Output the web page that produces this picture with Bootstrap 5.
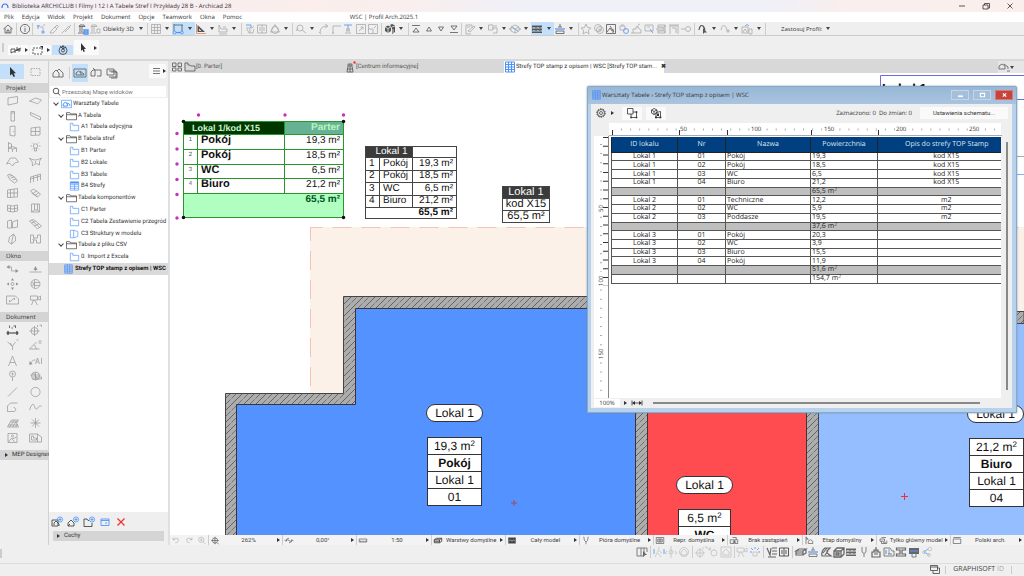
<!DOCTYPE html>
<html lang="pl">
<head>
<meta charset="utf-8">
<meta name="viewport" content="width=device-width, initial-scale=1">
<title>Archicad 28</title>
<link href="https://cdn.jsdelivr.net/npm/bootstrap@5.3.0/dist/css/bootstrap.min.css" rel="stylesheet">
<style>
:root{--chrome:#efefef;--hot:#c3dff9;--ink:#333;--blue:#4d92f8}
body{font-family:"Open Sans","Noto Sans",sans-serif;font-size:6px;line-height:8px;color:var(--ink);background:var(--chrome);text-rendering:geometricPrecision}
button,input{font:inherit;color:inherit}
button{border:0;background:none;padding:0}
a{color:inherit;text-decoration:none}
svg{display:block;overflow:visible}
.ico{width:12px;height:12px;fill:none;stroke:currentColor;stroke-width:.8;flex:none}
.ico .f{fill:currentColor;stroke:none}
.ico .b{stroke:var(--blue)}
.title-bar{height:12px;background:linear-gradient(90deg,#f3eff6,#fbeeec 30%,#f9efee 40%,#eff0f8 52%,#f0f0f8 75%,#f8efee 82%,#faefed)}
.menu-bar{height:10px;background:#fff}
.menu-bar a,.profile{line-height:11px}
.menu-links{gap:8px;padding-left:4px}
.profile{margin-left:-128px}
.tool-bar{height:14px;background:var(--chrome);border-bottom:1px solid #ccc;color:#555}
.tools{width:75%;padding-left:2px}
.tools>.tool{flex:25 1 0;min-width:0}
.tools>.drop{flex:20 1 0;min-width:0}
.tools>.split{flex:8 1 0;min-width:0}
.tools>.named{flex:69 1 0;min-width:0;text-align:center;color:#333}
.apply{margin-left:13px;color:#333}
.tool,.drop,.split{display:flex;align-items:center;justify-content:center;height:13px}
.split::before{content:"";width:1px;height:12px;background:#ccc}
.drop::before{content:"";border:2px solid transparent;border-top:3px solid #444;border-bottom:0}
.arrow-r::after{content:"";border:2px solid transparent;border-left:3px solid #333;border-right:0;flex:none}
.hot{background:var(--hot)}
.pale{color:#aaa}.faint{color:#c2c2c2}
.t-blue{color:#3d8bff}.t-red{color:#f02f2f}.t-dark{color:#333}
.bar-two{height:25px;border-bottom:2px solid #d8d8d8;padding:4px 2px}
.bar-two button{width:21px;height:10px;background:#fafafa}
.bar-two button+button{margin-left:1px}
.bar-two .hot{background:var(--hot)}
.bar-two .tall{width:25px;height:15px}
.grip{width:2px;height:9px;background:#ccc}
.toolbox{width:49px;border-right:1px solid #d0d0d0;color:#939393}
.toolbox h2,.fold{font-size:6px;font-weight:400;line-height:10px;height:10px;margin:0;background:#d4d4d4;padding-left:6px;color:#333;white-space:nowrap}
.toolbox .mep{padding-left:5px;font-family:Roboto,sans-serif}
.pair{display:grid;grid-template-columns:24px 23px;grid-auto-rows:1fr;margin-bottom:4px}
.pair.ten{height:154px}.pair.three{height:47px}.pair.eight{height:124px}
.pair .tool{height:auto;min-height:0}
.pair .ico{width:13px;stroke-width:.7}
.pair.top{height:19px;margin:3px 0 0;padding-bottom:4px}
.pair.top .hot{color:#333}
.navi{width:121px;border-right:2px solid #e0e0e0;font-family:Roboto,sans-serif}
.navi-head{height:24px;padding:3px 2px 0 1px;color:#555}
.navi-icons .tool{flex:none;width:16px;height:18px}
.navi-icons .split{width:6px;height:18px}
.menu-btn{width:17px;height:14px;background:#fafafa}
.search{height:11px;background:#fff;margin:1px 2px 1px 1px}
.search input{border:0;outline:0;padding:0;width:90px;height:10px;background:none}
.search input::placeholder{color:#777;opacity:1}
.tree-pane{background:#fff}
.tree{height:177px}
.tree li{flex:1 1 0;min-height:0;white-space:nowrap}
.tree .ico{width:11px;height:10px;margin-right:1px}
.tree .l0{padding-left:3px}.tree .l1{padding-left:8px}.tree .l2{padding-left:20px}.tree .l3{padding-left:14px}
.open-mark{width:4px;height:4px;border:solid #444;border-width:0 1px 1px 0;transform:rotate(45deg);margin:0 3px 2px 2px;flex:none}
.chosen{background:#dadada;font-weight:700;color:#111}
.navi-foot{height:19px}
.navi-foot .tool{width:16px}
.fold{padding-left:4px}
.tabs{height:12px;background:#d8d8d8;color:#555;font-family:Roboto,sans-serif}
.tabs .tab-item{width:160px;height:12px;white-space:nowrap}
.tabs .chip{width:14px;background:#e4e4e4}
.tabs .end{width:26px;background:#e6e6e6}
.tab-item.live{background:#fff;color:#333}
.status{height:10px;background:#f3f3f3;white-space:nowrap;color:#444;font-family:Roboto,sans-serif}
.quick{flex:1 1 0;min-width:0;padding:0 2px 0 1px;border-left:1px solid #ccc}
.status .first{width:38px}
.status .ico{height:9px;width:10px}
.bottom-bar{height:19px;border-bottom:1px solid #ddd}
.bottom-tools{width:297px;margin-left:auto;margin-right:91px;color:#666}
.bottom-tools>.tool{flex:25 1 0}.bottom-tools>.split{flex:8 1 0}
.foot{height:12px;color:#444}
.foot-id{font-size:7px;border:solid #ccc;border-width:0 1px;padding:0 7px}
.canvas-area{background:#fff;font-family:"Liberation Sans",Arial,sans-serif;color:#111}
.plan{position:absolute;inset:0;width:100%;height:100%}
.on-plan{position:absolute}
table{border-collapse:collapse}
.zone-a{left:13px;top:48px;width:161px;height:97px;font-size:10px;line-height:11px;table-layout:fixed}
.zone-a td,.zone-a th{border:1px solid #28962d;padding:0 3px;background:#fff;vertical-align:top}
.zone-a td:nth-child(2){font-weight:700;font-size:11px}
.zone-a td:first-child{font-size:6px;text-align:center;padding:0;color:#555}
.zone-a .cap{background:#003600;color:#c9f5cf;font-size:9px;line-height:12px;padding-left:8px;text-align:left}
.zone-a .floor{background:#67b294;color:#b7f7c0;font-size:10px;line-height:12px;text-align:right}
.zone-a tfoot td,.zone-a tfoot td:first-child{background:#b0ffc1;font-weight:700;font-size:10px;line-height:12px;color:#052;text-align:right;padding:0 3px}
.zone-b{left:195px;top:73px;width:92px;height:73px;font-size:10px;line-height:10px;table-layout:fixed;background:#fff}
.zone-b td,.zone-b th{border:1px solid #444;padding:0 3px;font-weight:400}
.zone-b th{background:#3b3b3b;color:#fff;text-align:center;padding-left:8px}
.zone-b tfoot td{font-weight:700}
.zone-c{left:332px;top:113px;width:48px;height:37px;font-size:11px;line-height:11px;text-align:center}
.zone-c td,.zone-c th{border:1px solid #444;padding:0;font-weight:400;background:#fff}
.zone-c th{background:#3b3b3b;color:#fff}
.tag{width:57px;height:18px;border:1px solid #333;border-radius:9px;background:#fff;font-size:12px;line-height:16px;text-align:center}
.stamp{width:55px;border:1px solid #333;background:#fff;font-size:12px;line-height:16px;text-align:center}
.stamp div+div{border-top:1px solid #333}
.stamp sup{font-size:8px;line-height:0;top:-4px}
.tag-pokoj{left:256px;top:331px}.stamp-pokoj{left:257px;top:364px}
.tag-wc{left:506px;top:403px}.stamp-wc{left:508px;top:436px;width:53px}
.tag-biuro{left:797px;top:332px}.stamp-biuro{left:799px;top:365px}
.sheet-win{left:417px;top:13px;width:430px;height:327px;background:#b6d2ec;border:1px solid #8aa9c8;border-radius:2px 2px 0 0;padding:0 4px 4px 3px;font-family:"Open Sans","Noto Sans",sans-serif;color:#333;box-shadow:0 0 2px #789}
.sheet-title{height:17px;background:linear-gradient(#98b6d6,#a9c4e0);margin:0 -4px 0 -3px;padding:0 3px}
.sheet-title .ico{height:10px;width:11px}
.win-btn{width:18px;height:10px;background:#a5bfdb;border:1px solid #c3d6ea;color:#fff}
.win-btn.end{background:#c8443a;border-color:#d77}
.sheet-body{background:var(--chrome)}
.sheet-tools{height:19px;padding:0 4px}
.sheet-tools .white{background:#fafafa;width:20px;height:13px;justify-content:center}
.scheme{background:#fafafa;width:88px;height:12px;font-family:Roboto,sans-serif}
.ruler-x{height:13px;margin-left:18px;margin-right:11px;background:#fff}
.ruler-y{width:15px;background:#fff;border-right:1px solid #888;margin-left:3px}
.page{background:#fff;padding:1px 0 0 2px}
.list-table{width:100%;height:147px;table-layout:fixed;font-size:7px;line-height:7px;color:#222}
.list-table th{background:#003f80;color:#dfe9f5;font-weight:400;text-align:center;height:15px;padding:0;border:1px solid #222;border-top-color:#003f80}
.list-table td{border:1px solid #555;padding:0 1px;white-space:nowrap;height:8px}
.list-table tr>:last-child{border-right:0;padding-left:14px}
.list-table td:nth-child(1),.list-table td:nth-child(2),.list-table td:nth-child(5){text-align:center}
.list-table .sum td{background:#bfbfbf}
.list-table sup{font-size:5px;line-height:0;top:-2px}
.side{width:11px}
.side span{display:block;width:2px;margin:6px auto 8px 5px;background:#888;flex:1}
.sheet-foot{height:10px;padding-left:3px}
.sheet-foot .zoom{background:#fff;width:26px;text-align:center}
.scroll-x{height:2px;background:#888;width:327px;margin-left:10px}
</style>
</head>
<body class="vh-100 d-flex flex-column overflow-hidden">

<header>
  <div class="title-bar d-flex align-items-center">
    <svg class="ico" viewBox="0 0 12 12"><path d="M2 8Q2 4 5 4Q8 4 8 8" stroke="#2d7bf0" stroke-width="1.2"/></svg>
    <span>Biblioteka ARCHICLUB I Filmy I 12 I A Tabele Stref I Przykłady 28 B - Archicad 28</span>
    <div class="ms-auto d-flex pe-1" data-icons="min"></div>
    <div class="d-flex ps-2" data-icons="restore"></div>
    <div class="d-flex ps-2 ms-1 pe-2" data-icons="close"></div>
  </div>
  <nav class="menu-bar d-flex position-relative">
    <div class="menu-links d-flex">
      <a href="#">Plik</a><a href="#">Edycja</a><a href="#">Widok</a><a href="#">Projekt</a><a href="#">Dokument</a><a href="#">Opcje</a><a href="#">Teamwork</a><a href="#">Okna</a><a href="#">Pomoc</a>
    </div>
    <span class="position-absolute start-50 translate-middle-x profile">WSC | Profil Arch.2025.1</span>
  </nav>
  <div class="tool-bar d-flex align-items-center">
    <div class="tools d-flex" data-icons="home | info | pick-pale dropper-pale syringe-pale | column column2-pale Obiekty_3D v | grid-pale v snap-hot v-hot setsq v tagx-pale v | box3-pale cols-pale tri-pale v | find-pale v arc-pale corner-pale lift-pale resize-pale resize2-pale | cubes v | topmost up down bottommost | editm-pale v copym-pale v cubeb-pale v hatch-hot v-hot level v | star-pale gear2-pale photo cam3-pale city-pale sel-pale stack-pale frame-pale link-pale | pickarc v arc2-pale v image2-pale v |"></div>
    <button class="d-flex align-items-center apply">Zastosuj Profil:<span class="drop ms-1"></span></button>
  </div>
  <div class="bar-two d-flex align-items-end">
    <span class="grip me-1 align-self-center"></span>
    <div class="d-flex align-items-end">
      <button class="d-flex align-items-center justify-content-around arrow-r" aria-label="Metoda"><svg class="ico" viewBox="0 0 12 12"><path d="M1 9V5H5V9M6 6H11M7 3V7M9 4V8M1 9L11 4"/></svg></button>
      <button class="d-flex align-items-center justify-content-around arrow-r" aria-label="Obszar"><svg class="ico" viewBox="0 0 12 12"><path d="M1 4H10V10H1Z" stroke-dasharray="2 1"/><path d="M8 2H11V5Z" class="f"/></svg></button>
      <button class="hot d-flex align-items-center justify-content-center" aria-label="Obrót"><svg class="ico" viewBox="0 0 12 12"><circle cx="6" cy="6.500" r="4"/><circle cx="6" cy="6.500" r="1.500"/><path d="M6 1V5M3 2L6 5L9 3"/></svg></button>
      <button class="tall d-flex align-items-center justify-content-around arrow-r" aria-label="Strzałka"><svg class="ico" viewBox="0 0 12 12"><path class="f" d="M4 1V9L5.500 7.500L6.500 10L7.800 9.400L7 7H9Z"/></svg></button>
    </div>
  </div>
</header>

<main class="d-flex flex-grow-1 overflow-hidden">
  <aside class="toolbox flex-shrink-0">
    <div class="pair top" data-icons="cursor-hot marquee"></div>
    <h2>Projekt</h2>
    <div class="pair ten" data-icons="wall slab pillar beam door window chair lamp roof shell stair rail curtain stairb curtain2 opening panel mesh morph zone"></div>
    <h2>Okno</h2>
    <div class="pair three" data-icons="section elev change globe sheet camera"></div>
    <h2>Dokument</h2>
    <div class="pair eight" data-icons="dim-dark axis radial angle letter label pin ball line circle poly spline fill spark figure drawing"></div>
    <h2 class="mep"><span class="arrow-r d-flex align-items-center gap-1 flex-row-reverse justify-content-end">MEP Designer</span></h2>
  </aside>

  <aside class="navi flex-shrink-0 d-flex flex-column">
    <div class="navi-head d-flex align-items-start">
      <div class="d-flex flex-grow-1 navi-icons" data-icons="houses | houseview-hot layoutbook publisher"></div>
      <button class="menu-btn d-flex align-items-center justify-content-around arrow-r flex-shrink-0" aria-label="Menu"><svg class="ico" viewBox="0 0 12 12"><path d="M3 3.500H10M3 6H10M3 8.500H10"/></svg></button>
    </div>
    <div class="search d-flex align-items-center"><svg class="ico" viewBox="0 0 12 12"><circle cx="6" cy="5" r="2.800"/><path d="M8 7L10 9.500"/></svg><input type="text" aria-label="Szukaj" placeholder="Przeszukaj Mapę widoków"></div>
    <div class="tree-pane flex-grow-1">
      <ul class="tree list-unstyled m-0 d-flex flex-column" id="tree"></ul>
    </div>
    <div class="navi-foot d-flex align-items-center" data-icons="addview addhouse addfolder card-blue delete-red"></div>
    <div class="fold mx-1 mb-1 d-flex align-items-center"><span class="arrow-r d-flex align-items-center gap-1 flex-row-reverse">Cechy</span></div>
  </aside>

  <section class="flex-grow-1 d-flex flex-column overflow-hidden">
    <div class="tabs d-flex align-items-center">
      <span class="chip d-flex justify-content-center" data-icons="tiles"></span>
      <a href="#" class="tab-item d-flex align-items-center" data-icon="folder">[0. Parter]</a>
      <a href="#" class="tab-item d-flex align-items-center" data-icon="tower">[Centrum informacyjne]</a>
      <a href="#" class="tab-item live d-flex align-items-center" data-icon="tablegrid-blue">Strefy TOP stamp z opisem | WSC [Strefy TOP stam...<b class="ms-1">✖</b></a>
      <span class="end ms-auto d-flex align-items-center" data-icons="housesm v"></span>
    </div>

    <div class="canvas-area position-relative flex-grow-1 overflow-hidden">
      <svg class="plan" viewBox="170 73 854 462" preserveAspectRatio="xMinYMin slice" aria-hidden="true">
        <defs>
          <pattern id="hatch" width="12" height="12" patternUnits="userSpaceOnUse">
            <rect width="12" height="12" fill="#adadad"/>
            <path d="M-1 13L13 -1" stroke="#5a5a5a" stroke-width=".9"/>
            <path d="M-1 7L7 -1M5 13L13 5" stroke="#6a6a6a" stroke-width=".9" stroke-dasharray="5 1.500"/>
          </pattern>
        </defs>
        <path d="M310 227H1024V400H310Z" fill="#fcf1e8"/>
        <path d="M310.500 227.500H1024" stroke="#f6c4ae" stroke-width="1" stroke-dasharray="19 10" stroke-dashoffset="7" fill="none"/>
        <path d="M310.500 227V393" stroke="#f6c4ae" stroke-dasharray="19 10" stroke-dashoffset="5"/>
        <path d="M343.500 296.500H1000V311.500H1024V540H225.500V393.500H343.500Z" fill="url(#hatch)" stroke="#444"/>
        <path d="M355.500 308.500H635.500V540H236.500V404.500H355.500Z" fill="#5492ff" stroke="#334"/>
        <path d="M647.500 308H806.500V540H647.500Z" fill="#ff4c50" stroke="#433"/>
        <path d="M818.500 323.500H1030V540H818.500Z" fill="#94beff" stroke="#445"/>
        <path d="M1030 75.500H880.500V120M1010 99.500H1030" fill="none" stroke="#6c6ce8"/>
        <path d="M1010 156.500H1030" stroke="#aaa"/><path d="M1010 174.500H1030" stroke="#8fa4ff"/>
        <text x="882" y="93" font-family="Liberation Sans, sans-serif" font-weight="700" font-size="13">Lokal 1</text>
        <path d="M511 503H517M514 500V506" stroke="#a3485a"/><path d="M901 496.500H908M904.500 493V500" stroke="#f02f2f"/>
      </svg>

      <table class="zone-a on-plan">
        <colgroup><col width="14"><col width="87"><col width="59"></colgroup>
        <thead><tr height="12"><th class="cap" colspan="2">Lokal 1/kod X15</th><th class="floor">Parter</th></tr></thead>
        <tbody>
          <tr><td>1</td><td>Pokój</td><td class="text-end">19,3 m²</td></tr>
          <tr><td>2</td><td>Pokój</td><td class="text-end">18,5 m²</td></tr>
          <tr><td>3</td><td>WC</td><td class="text-end">6,5 m²</td></tr>
          <tr><td>4</td><td>Biuro</td><td class="text-end">21,2 m²</td></tr>
        </tbody>
        <tfoot><tr height="24"><td colspan="3">65,5 m²</td></tr></tfoot>
      </table>
      <svg class="plan" viewBox="170 73 854 462" preserveAspectRatio="xMinYMin slice" aria-hidden="true">
        <g fill="#c62fc6"><circle cx="198.500" cy="115" r="1.700"/><circle cx="285" cy="115" r="1.700"/><circle cx="343.500" cy="115" r="1.700"/><circle cx="177" cy="133.500" r="1.700"/><circle cx="177" cy="149" r="1.700"/><circle cx="177" cy="164" r="1.700"/><circle cx="177" cy="179.500" r="1.700"/><circle cx="177" cy="194.500" r="1.700"/><circle cx="177" cy="218" r="1.700"/></g>
        <g fill="#111"><circle cx="183.500" cy="121.500" r="1.800"/><circle cx="343.500" cy="121.500" r="1.800"/><circle cx="183.500" cy="217.500" r="1.800"/><circle cx="343.500" cy="217.500" r="1.800"/></g>
      </svg>

      <table class="zone-b on-plan">
        <colgroup><col width="14"><col width="33"><col width="44"></colgroup>
        <thead><tr><th colspan="2">Lokal 1</th><td></td></tr></thead>
        <tbody>
          <tr><td>1</td><td>Pokój</td><td class="text-end">19,3 m²</td></tr>
          <tr><td>2</td><td>Pokój</td><td class="text-end">18,5 m²</td></tr>
          <tr><td>3</td><td>WC</td><td class="text-end">6,5 m²</td></tr>
          <tr><td>4</td><td>Biuro</td><td class="text-end">21,2 m²</td></tr>
        </tbody>
        <tfoot><tr><td colspan="3" class="text-end">65,5 m²</td></tr></tfoot>
      </table>

      <table class="zone-c on-plan">
        <tr><th>Lokal 1</th></tr><tr><td>kod X15</td></tr><tr><td>65,5 m²</td></tr>
      </table>

      <div class="tag on-plan tag-pokoj">Lokal 1</div>
      <div class="stamp on-plan stamp-pokoj"><div>19,3 m<sup>2</sup></div><div class="fw-bold">Pokój</div><div>Lokal 1</div><div>01</div></div>
      <div class="tag on-plan tag-wc">Lokal 1</div>
      <div class="stamp on-plan stamp-wc"><div>6,5 m<sup>2</sup></div><div class="fw-bold">WC</div></div>
      <div class="tag on-plan tag-biuro">Lokal 1</div>
      <div class="stamp on-plan stamp-biuro"><div>21,2 m<sup>2</sup></div><div class="fw-bold">Biuro</div><div>Lokal 1</div><div>04</div></div>

      <div class="sheet-win on-plan d-flex flex-column">
        <div class="sheet-title d-flex align-items-center">
          <span class="d-flex align-items-center" data-icon="tablegrid-blue">Warsztaty Tabele › Strefy TOP stamp z opisem | WSC</span>
          <div class="ms-auto d-flex">
            <button class="win-btn me-1 d-flex align-items-center justify-content-center" aria-label="Minimalizuj"><svg class="ico" viewBox="0 0 12 12"><path d="M3 7.500H9" stroke-width="2"/></svg></button>
            <button class="win-btn me-1 d-flex align-items-center justify-content-center" aria-label="Maksymalizuj"><svg class="ico" viewBox="0 0 12 12"><path d="M3.500 4H8.500V8H3.500Z" stroke-width="1.300"/></svg></button>
            <button class="win-btn end d-flex align-items-center justify-content-center" aria-label="Zamknij"><svg class="ico" viewBox="0 0 12 12"><path d="M4 4L8 8M8 4L4 8" stroke-width="1.500"/></svg></button>
          </div>
        </div>
        <div class="sheet-body flex-grow-1 d-flex flex-column overflow-hidden">
          <div class="sheet-tools d-flex align-items-center">
            <button class="d-flex align-items-center arrow-r gap-1" aria-label="Ustawienia"><svg class="ico" viewBox="0 0 12 12"><circle cx="6" cy="6" r="4.200" stroke-dasharray="1.500 1.100" stroke-width="1"/><circle cx="6" cy="6" r="3.500" stroke-width=".7"/><circle cx="6" cy="6" r="1.500" stroke-width=".7"/></svg></button>
            <div class="d-flex gap-1">
              <button class="white d-flex align-items-center ms-2" aria-label="Zaznacz na planie"><svg class="ico" viewBox="0 0 12 12"><path d="M1.500 1.500H7V7H1.500ZM7 5H10.500V10.500H5V7"/><path class="f" d="M4.300 9.800H6V11.300H4.300ZM9.800 9.800H11.300V11.300H9.800ZM9.800 4.300H11.300V6H9.800Z"/></svg></button>
              <button class="white d-flex align-items-center" aria-label="Zaznacz w 3D"><svg class="ico" viewBox="0 0 12 12"><path d="M1.500 3L4 1.500L7 3V6L4 7.500L1.500 6ZM1.500 3L4 4.500L7 3M4 4.500V7.500M6 5.500L10.500 4.500V10.500H6Z"/><path class="f" d="M5 9.500H7V11.300H5ZM9.500 9.500H11.300V11.300H9.500ZM7 6.500H9V9H7Z"/></svg></button>
            </div>
            <span class="ms-auto me-2">Zaznaczono: 0&nbsp; Do zmian: 0</span>
            <button class="scheme">Ustawienia schematu...</button>
          </div>
          <div class="ruler-x">
            <svg width="100%" height="13" aria-hidden="true">
              <path d="M0 12.500H393" stroke="#aaa"/>
              <path d="M12 6.500H393" stroke="#aaa" stroke-width="2" stroke-dasharray="1 8.100"/>
              <path d="M3.500 7V12M118.500 7V12M202.500 7V12M269.500 7V12" stroke="#333"/>
              <path fill="#fff" d="M69 2H80V10H69ZM141 2H156V10H141ZM213 2H227V10H213ZM286 2H300V10H286ZM359 2H373V10H359Z"/>
              <path d="M70.500 7V12" stroke="#333"/>
              <g font-size="6" fill="#333"><text x="71" y="8">50</text><text x="142" y="8">100</text><text x="215" y="8">150</text><text x="287" y="8">200</text><text x="360" y="8">250</text></g>
            </svg>
          </div>
          <div class="d-flex flex-grow-1 overflow-hidden">
            <div class="ruler-y flex-shrink-0">
              <svg width="14" height="264" aria-hidden="true">
                <path d="M11.500 1V150" stroke="#333" stroke-width="5" stroke-dasharray="1 7.750"/>
                <path d="M7 8V264" stroke="#aaa" stroke-width="2" stroke-dasharray="1 8.100"/>
                <path fill="#fff" d="M3 66H9V78H3ZM3 136H9V151H3ZM3 210H9V226H3Z"/>
                <g font-size="6" fill="#333"><text transform="translate(9 76) rotate(-90)">50</text><text transform="translate(9 150) rotate(-90)">100</text><text transform="translate(9 223) rotate(-90)">150</text></g>
              </svg>
            </div>
            <div class="page flex-grow-1 overflow-hidden">
              <table class="list-table">
                <colgroup><col width="66"><col width="48"><col width="85"><col width="67"><col width="124"></colgroup>
                <thead><tr><th>ID lokalu</th><th>Nr</th><th>Nazwa</th><th>Powierzchnia</th><th>Opis do strefy TOP Stamp</th></tr></thead>
                <tbody>
                  <tr><td>Lokal 1</td><td>01</td><td>Pokój</td><td>19,3</td><td>kod X15</td></tr>
                  <tr><td>Lokal 1</td><td>02</td><td>Pokój</td><td>18,5</td><td>kod X15</td></tr>
                  <tr><td>Lokal 1</td><td>03</td><td>WC</td><td>6,5</td><td>kod X15</td></tr>
                  <tr><td>Lokal 1</td><td>04</td><td>Biuro</td><td>21,2</td><td>kod X15</td></tr>
                  <tr class="sum"><td></td><td></td><td></td><td>65,5 m<sup>2</sup></td><td></td></tr>
                  <tr><td>Lokal 2</td><td>01</td><td>Techniczne</td><td>12,2</td><td>m2</td></tr>
                  <tr><td>Lokal 2</td><td>02</td><td>WC</td><td>5,9</td><td>m2</td></tr>
                  <tr><td>Lokal 2</td><td>03</td><td>Poddasze</td><td>19,5</td><td>m2</td></tr>
                  <tr class="sum"><td></td><td></td><td></td><td>37,6 m<sup>2</sup></td><td></td></tr>
                  <tr><td>Lokal 3</td><td>01</td><td>Pokój</td><td>20,3</td><td></td></tr>
                  <tr><td>Lokal 3</td><td>02</td><td>WC</td><td>3,9</td><td></td></tr>
                  <tr><td>Lokal 3</td><td>03</td><td>Biuro</td><td>15,5</td><td></td></tr>
                  <tr><td>Lokal 3</td><td>04</td><td>Pokój</td><td>11,9</td><td></td></tr>
                  <tr class="sum"><td></td><td></td><td></td><td>51,6 m<sup>2</sup></td><td></td></tr>
                  <tr><td></td><td></td><td></td><td>154,7 m<sup>2</sup></td><td></td></tr>
                </tbody>
              </table>
            </div>
            <div class="side d-flex flex-column flex-shrink-0"><span></span></div>
          </div>
          <div class="sheet-foot d-flex align-items-center">
            <span class="zoom">100%</span>
            <span class="arrow-r d-flex ms-1"></span>
            <svg class="ico ms-1" viewBox="0 0 12 12"><path d="M1 3.500V8.500M11 3.500V8.500M2 6H10"/><path class="f" d="M1 6L4 4V8ZM11 6L8 4V8Z"/></svg>
            <span class="scroll-x"></span>
          </div>
        </div>
      </div>
    </div>

    <div class="status d-flex align-items-stretch" id="status">
      <div class="first d-flex align-items-center justify-content-around flex-shrink-0 pale" data-icons="undo redo zoomin"></div>
    </div>
  </section>
</main>

<footer>
  <div class="bottom-bar d-flex align-items-start">
    <span class="grip mt-1"></span>
    <div class="bottom-tools d-flex" data-icons="cursorpage | walk-faint orbit-faint cam-faint | axis-faint sun-faint frameh-faint | camera-faint sunb-faint | dims cols-dark | layers level wallh layersb hatch fork paint zoneb ibeam hatchtop nodes-faint"></div>
  </div>
  <div class="foot d-flex align-items-center justify-content-end">
    <div class="me-1" data-icons="windows"></div>
    <span class="foot-id me-2">GRAPHISOFT <span class="pale">ID</span></span>
    <span class="ms-1"></span>
  </div>
</footer>

<script>
/* Icon drawings on a 12 x 12 grid */
const P = d => `<path d="${d}"/>`, B = d => `<path class="b" d="${d}"/>`, F = d => `<path class="f" d="${d}"/>`,
      C = (x, y, r) => `<circle cx="${x}" cy="${y}" r="${r}"/>`;
const ICONS = {
  min: P('M3 6H9'), restore: P('M3 5H8V9H3ZM4.500 5V3.500H9.500V8H8'), close: P('M3.500 3.500L8.500 8.500M8.500 3.500L3.500 8.500'),
  home: P('M1.500 6L6 2L10.500 6M3 5V10H9V5M5 10V7H7V10'), info: C(6,6,4.6) + P('M6 5V9M6 3.200V4.200'),
  pick: B('M2 3H5M3 2V6M8 7V11M6 9H10') + P('M5 4H8V7M8 2H10'), dropper: P('M2 10L3 8L7 4L9 6L5 10ZM7 4L9 2L10.500 3.500L9 5') , syringe: P('M1.500 10.500L4 8L8 4M5 9L9 5M8 3L10 5M9 4L11 2'),
  column: P('M1 10H7M2 3.500H8L7 2H3ZM3 4V9M5 4V9') + `<path class="b" d="M7 7H11V11H7ZM7 9H11" stroke-width="1.300"/>`,
  column2: P('M1 10H7M2 3.500H8L7 2H3ZM3 4V9M5 4V9M8 6H11V10H8Z'),
  grid: P('M1.500 1.500H10.500V10.500H1.500ZM4.500 1.500V10.500M7.500 1.500V10.500M1.500 4.500H10.500M1.500 7.500H10.500'),
  snap: P('M2 1V8M2 2H11M10 2V8') + `<path class="b" d="M4 9.500H9" stroke-width="1.200"/><circle class="b" cx="2.500" cy="9.500" r="1.400"/><circle class="b" cx="10" cy="9.500" r="1.400"/>`,
  setsq: F('M2.500 2L10 9H2.500Z') + `<path d="M1.500 1V10.500H11" stroke="#e08060"/><path d="M4.500 6V7.500H6" stroke="#fff"/>`, tagx: P('M2 2V9H10V6H4ZM6 4H9M2 11H10'),
  box3: B('M2 2H7V5') + P('M2 5H8L10 3M3 6L5 10H9L10 6M6 6V10'), cols: P('M1.500 2H10.500V10H1.500ZM4 4V8M8 4V8M6 2V10'), tri: P('M6 1.500L10.500 9H1.500Z')+C(6,7,3.5),
  find: C(5,5,3) + P('M7 7L11 10M3 5L1 8'), arc: P('M2 10Q2 3 9 3M7 1L10 3L7 5M1 9L3 11'), corner: P('M3 11V3H11M2 10H4'),
  lift: B('M2 2H10M6 2V6') + P('M3 10H9M4 7H8M5 5V9M7 5V9'), resize: P('M1.500 1.500H10.500V10.500H1.500ZM4 8L8 4M5.500 4H8V6.500'), resize2: P('M1.500 1.500H10.500V10.500H1.500ZM1.500 6H6V10.500M7 5L9 3'),
  cubes: F('M1 4L4 2.500L7 4V8L4 10L1 8ZM6 2L8 1L11 2.500V9L8 11V5Z') + '<path stroke="#eee" d="M1 4L4 5.500L7 4M4 5.500V10M8 4L11 3M9 6V10"/>',
  topmost: P('M2 2.500H10M6 5L3 9H9Z'), up: P('M6 4L3.500 8H8.500Z'), down: P('M6 8L3.500 4H8.500Z'), bottommost: P('M2 9.500H10M6 7L3 3H9Z'),
  editm: P('M2 2H8V5M2 2V11H7M4 8L10 3L11 4L6 9ZM3 4H6'), copym: P('M1.500 2H6V7H1.500ZM5 5H10V10H6M7 3L10 3'), cubeb: B('M0 6H2M10 6H12M3 4L9 8')+P('M6 2L10 4V8L6 10L2 8V4ZM2 4L6 6L10 4M6 6V10'),
  hatch: F('M1 2.500H11V4H1ZM1 5.500H11V7H1ZM1 8.500H11V10H1Z') + P('M1 5L3 3.500L5 5L7 3.500L9 5L11 3.500M1 8L3 6.500L5 8L7 6.500L9 8L11 6.500'),
  level: P('M2 10.500H10V8H2ZM4 4H8M6 1V4') + `<path class="b" d="M1 6H11" stroke-width="1.200"/>`,
  star: P('M6 1L7.500 4.500L11 5L8.300 7.300L9 11L6 9L3 11L3.700 7.300L1 5L4.500 4.500Z'), gear2: C(5,5,3.5)+C(7,7,3.5)+C(7,7,1.2),
  photo: P('M1.500 1.500H10.500V10.500H1.500ZM2 9L5 5L7 8M5 3L9 9M8 6V10') , cam3: P('M2 3H7V7H2ZM3 2H6')+ `<circle class="b" cx="8" cy="8" r="2.500"/>`, city: P('M1 10H11V7L8 5V3L6 4V6H3V10M8 2L10 1'),
  sel: P('M2 2H10V8H2ZM4 4H7')+B('M7 6L10 10'), stack: P('M3 2H10V4H3ZM2 5H9V7H2ZM3 8H10V10H3ZM10 2V10'), frame: P('M2 3H10V11M2 3V11M1 2H11M4 5H8V10'), link: P('M1 6H5')+C(8,6,2.5),
  pickarc: '<path d="M2 7Q3 1 6 3Q7 4 8 7" stroke-width="1.200"/>' + F('M6 5V11L7.500 9.500H10Z'), arc2: P('M2 7Q3 1 6 3Q7 4 8 7M7 8H11M9 6V10'), image2: B('M4 3Q6 0 8 3')+P('M1 4H7V10H1ZM8 6H11V11H8ZM2 9L4 6L6 9'),
  cursor: F('M3.500 1V9.500L5.500 8L7 11L8.500 10.200L7.200 7.300H9.500Z'), marquee: '<path d="M1.500 2.500H10.500V9.500H1.500Z" stroke-dasharray="1.500 1"/>',
  wall: P('M1.500 3L11 1.500V8L1.500 10Z'), slab: P('M0 6L6 3L12 5L8 9L5 7.500Z'), pillar: P('M4.500 1.500H8V11H4.500ZM4.500 3H8'), beam: P('M1 2.500L11 7V10L1 5Z'),
  door: P('M3.500 1.500L8.500 1V11L3.500 10.500ZM7 6V7'), window: P('M1.500 3L10.500 2V10L1.500 10.500ZM6 2.500V10M1.500 6.500H10.500'), chair: P('M2 1V7L6 8V11M2 7V11M2 2L5 3V7M2 7L6 5.500L10 7V11M6 8L10 7'), lamp: C(6,5,2.2)+P('M5 7V10H7V7M1 5H2.500M9.500 5H11M2.500 1.500L3.500 2.500M9.500 1.500L8.500 2.500M2.500 8.500L3.500 7.500M9.500 8.500L8.500 7.500'),
  roof: P('M0 8L4 2L9 2L12 6L8 7L6 10L3 7Z'), shell: P('M0 2Q5 6 12 2Q9 5 10 9Q6 6 3 10Q4 6 0 2M6 5V7'), stair: P('M1 3L4 2L6 4L8 5L11 9L8 11L5 9L3 7ZM3 4L6 3.500M4 6L8 5M6 8L10 7'), rail: P('M1 5L11 2M1 7L11 4M1 5V11M4 4V10M8 3V9M11 2V8'),
  curtain: P('M1 3L11 1.500V10L1 10.500ZM4 2.500V10.500M7.500 2V10M1 6H11'), stairb: P('M1 4L4 2L11 7L8 10ZM2 6L8 10M4 6L7 4M6 8L9 6'), curtain2: P('M1 3Q6 5 11 3V9Q6 11 1 9ZM4 4V10M8 4V10M1 6Q6 8 11 6'), opening: P('M2 2H10V10H2ZM5 2V8H8V2M2 10L5 8M10 10L8 8'),
  panel: P('M1 3L5 2V10L1 10ZM6 4L11 2V9L6 10Z'), mesh: P('M0 3L4 1.500L12 8L8 11ZM2 5L6 3.500M4.500 8L9 6M2 2L10 9.500'), morph: P('M3 4L7 1L9 4V8L5 11L2 9ZM7 1L6 5L5 11'), zone: P('M1 2H4V5H8V2H11V10H7V7H4V10H1ZM3 7L5 5'),
  section: P('M1 4H5V8H11')+F('M0 4L3 2V6ZM12 8L9 6V10Z'), elev: P('M0 9H12M6 8V5')+F('M6 3L8 7H4Z'), change: C(6,6,1.5)+F('M6 0L7.500 2.500H4.500ZM6 12L7.500 9.500H4.500ZM0 6L2.500 4.500V7.500ZM12 6L9.500 4.500V7.500Z'), globe: C(6,6,4.5)+P('M5 2V10M5 4.500H10M5 7.500H10M2 4L5 6L2 8'),
  sheet: P('M0 2H9L12 5V10H0ZM3 8L8 4M3 8V6M8 4V6'), camera: P('M1 2H8V6H1ZM8 4L11 2V6L8 5M4 6L2 11M5 6L8 11'),
  dim: '<path d="M0 9H12M1.500 7V11M10.500 7V11" stroke-width="1.200"/><path d="M3 4V1.500M5 4H6.500M9 1.500V4M7 2H9"/>', axis: C(5,7,3.5)+P('M0 7H10M5 2V12M8 1V3M10 1H12V3'), radial: P('M1 3L6 7L9 3M6 7V11M10 1H12M4 4L5 7'), angle: P('M0 10H10M0 10L7 3M5 6L7 10M9 2H12M9 4H12'),
  letter: P('M2 11L6 1L10 11M3.500 7.500H8.500'), label: P('M0 9L4 5H6M6 9L8 3L10 9M7 7H9M12 9V3')+F('M0 10V6L3 9Z'), pin: C(6,4,3)+P('M6 7V11M5 4H7M6 2.500V5.500'), ball: C(6,6,4)+P('M1 5H11M3 7H12V9H3M6 2V10M4 3L8 9'),
  line: P('M1.500 10.500L10.500 1.500'), circle: C(6,6,4.6), poly: P('M1 10.500V5L4 2H11M1 10.500H8Q11 8 7 6'), spline: P('M0 9Q3 0 5 5Q6 11 9 6Q11 3 12 6'),
  fill: P('M1 10L5 3H12L10 6L12 10ZM3 10L8 3M6 10L10 4M9 10L11 7M2 8H11M4 5H11'), spark: P('M6 1V11M1 6H11M2.500 2.500L9.500 9.500M9.500 2.500L2.500 9.500'), figure: P('M1.500 1.500H10.500V10.500H1.500ZM2 10L5 6L8 10M6 7L10 5')+C(6,4,1), drawing: P('M0 2H8V10H0ZM8 2L12 5V10H8M2 4H4V6H7V8H2Z'),
  houses: P('M1 10V6L4 3L7 6V10ZM5 4L7 2L11 6V10H7'), houseview: P('M0 2H12V10H0ZM2 8V6L4.500 4L7 6V8ZM6 4L10 7V8H7'), layoutbook: P('M3 3H5V9H1V5ZM5 3H11V9H7M3 1L5 3'), publisher: P('M1 2H8V8H1ZM3 4H10V10H3M5 5H11V11H5'),
  project: B('M0 1.500H12V10.500H0Z')+'<path class="b" stroke-width="1.200" d="M2 8.500V6L4.500 4L7 6V8.500ZM6 4.500L10 6.500V8.500"/>', dir: P('M0 2V10.500H12V3.500H5L4 2ZM0 4.500H12'), view: B('M1 5V1.500H4V4H11V10.500H1Z'), tbl: B('M1 1H11V11H1ZM1 4H11M1 6.300H11M1 8.700H11M6 4V11')+'<path class="b" stroke-width="2" d="M1 2H11"/>',
  elevb: B('M1 1.500H5V10.500H1ZM5 1.500L10 3V9L5 10.500'), tablegrid: '<path class="b" stroke-width="1" d="M1.500 1H10.500V11H1.500ZM4.500 1V11M7.500 1V11M1.500 3.500H10.500M1.500 6H10.500M1.500 8.500H10.500"/>',
  addview: P('M1 4H7V10H1ZM3 9V7L5 5L8 8V10')+`<circle class="b" cx="9" cy="3.500" r="2.600"/>`+B('M9 2V5M7.500 3.500H10.500'), addhouse: P('M1 10V7L4 4L7 7V10ZM1 10L3 8')+`<circle class="b" cx="9" cy="3.500" r="2.600"/>`+B('M9 2V5M7.500 3.500H10.500'), addfolder: P('M1 10.500V3H4L5 4.500H6M1 10.500H9V7')+`<circle class="b" cx="9" cy="3.500" r="2.600"/>`+B('M9 2V5M7.500 3.500H10.500'),
  card: P('M2 3H10V9.500H2ZM2 4.500H10M6 7H8'), delete: '<path stroke-width="1.200" d="M2.500 2.500L9.500 9.500M9.500 2.500L2.500 9.500"/>',
  tiles: P('M1.500 2H5V5.500H1.500ZM7 2H10.500V5.500H7ZM1.500 7H5V10H1.500ZM7 7H10.500V10H7Z'), folder: P('M1 10V2H4V4H6L7 5H11V10Z'), tower: P('M3 11L4 5H8L9 11ZM4 5V3H8V5M6 3V11M3 8H9')+'<circle cx="10.500" cy="1.500" r="1.200" fill="#f33" stroke="none"/>', housesm: P('M1 8V5L4 3L7 5V8ZM6 3L10 6V8M9 10H12'),
  undo: P('M2 5Q5 1 9 4Q10 9 5 9M2 2V5H5'), redo: P('M10 5Q7 1 3 4Q2 9 7 9M10 2V5H7'), zoomin: C(5,5,3.5)+P('M7.500 7.500L11 11M3.500 5H6.500M5 3.500V6.500'), fit: C(6,6,3.5)+P('M6 1V11M1 6H11M9 9L11 11'), turn: P('M2 7Q2 3 6 3M10 5Q10 9 6 9M0 5L2 7L4 5M8 7L10 5L12 7M4 5L8 7'), scale: P('M1 4H11V8H1ZM3 6V8M6 6V8M9 6V8'),
  layers: '<path stroke-width="1.200" d="M1 5H8L11 3H4ZM1 5V9H8V5M8 9L11 7V3M1 7H8"/>', pens: P('M3 1L4 6L6 8L8 6L9 1M6 8V11'), modelview: F('M1 2H11V10H1Z')+'<path stroke="#eee" d="M2 7L4 5L6 7L8 5L10 7"/>', screen: P('M1 2H11V10H1ZM3 4H9V8H3ZM5 4V8M7 4V8'), override: P('M1 5H6V10H1ZM4 2H9V5M7 5H11V10H7ZM4 8H9'), phase: P('M2 11V1L5 5M2 4H5M5 10V7L8 5L11 7V10Z'), structure: P('M2 4H8V7H2ZM4 2H10M4 7V10H11V6M6 9H10'), norm: P('M1 2H11M1 4H11V10H1Z'),
  cursorpage: P('M1 2H8V10H1ZM5 2V10M8 2H11V6')+F('M7 5V11L9 9H11Z'), walk: P('M6 1V3M6 3L4 7L2 11M6 5L9 7M5 7L8 11')+B('M1 3V8M11 3V8'), orbit: C(6,6,2)+P('M6 0V12M2 5L0 7L2 8M10 5L12 7L10 8'), cam: C(6,6,4.5)+P('M3 6L6 3L9 6V9H3Z'), sun: C(7,7,3)+P('M1 3H4M3 1V5M7 3V4'), frameh: P('M1 1H11V11H1ZM3 6L6 3L9 6V9H3Z'), sunb: B('M6 1V3M1 6H3M9 6H11M2 2L4 4M10 2L8 4')+P('M4 6H8V10H4Z'),
  dims: '<path stroke-width="1.200" d="M1 2L4 9L5 2M6 2H11M6 5H11M6 8H11M2 11H10"/>', wallh: '<path stroke-width="1.200" d="M2 10Q1 5 5 2H10L7 5V7L11 10ZM3 7L7 2M5 9L8 5"/>', layersb: '<path stroke-width="1.300" d="M1 5L4 2H11V8L8 11H1ZM1 5H8V11M8 5L11 2M3 7H6V9H3Z"/>', fork: P('M4 1V5Q4 7 6 7.500Q8 7 8 5V1M6 7.500V11'), paint: '<path stroke-width="1.200" d="M6 1V5M2 6H10V11H2ZM4 6V4H8V6M4 8H8"/>', zoneb: B('M6 3V8')+P('M1 2H7L9 5H11V10H1ZM3 4V8M5 8H9'), ibeam: '<path stroke-width="1.200" d="M1.500 2H10.500V4H7V8H10.500V10H1.500V8H5V4H1.500Z"/>', hatchtop: F('M1 2H11V8H1Z')+`<path class="b" stroke-width="1.200" d="M2 5H10"/>`+P('M4 8V11H8V8'), nodes: B('M3 6L7 3M3 6L8 9')+C(3,6,1.5)+C(9,3,1.8)+C(8,9,1.5), windows: P('M1.500 1.500H8.500V6.500H1.500ZM1.500 3H8.500M4 6.500V9.500H10.500V4H8.500')
};
const icon = n => `<svg class="ico" viewBox="0 0 12 12" aria-hidden="true">${ICONS[n] || ''}</svg>`;

function expand(token) {
  const [name, mod] = token.split('-');
  const cls = mod ? ({hot:'hot', pale:'pale', faint:'faint'}[mod] || 't-' + mod) : '';
  if (name === '|') return '<span class="split"></span>';
  if (name === 'v') return `<button class="drop ${cls}" aria-label="Rozwiń"></button>`;
  if (name.includes('_')) return `<span class="named text-nowrap align-self-center">${name.replace('_', ' ')}</span>`;
  return `<button class="tool ${cls}" aria-label="${name}">${icon(name)}</button>`;
}

/* Navigator tree: level, icon, label */
document.getElementById('tree').innerHTML = [
  ['l0','project','Warsztaty Tabele'], ['l1','dir','A Tabela'], ['l2','view','A1 Tabela edycyjna'], ['l1','dir','B Tabela stref'],
  ['l2','view','B1 Parter'], ['l2','view','B2 Lokale'], ['l2','view','B3 Tabele'], ['l2','tbl','B4 Strefy'], ['l1','dir','Tabela komponentów'],
  ['l2','view','C1 Parter'], ['l2','view','C2 Tabela Zestawienie przegród'], ['l2','elevb','C3 Struktury w modelu'], ['l1','dir','Tabela z pliku CSV'],
  ['l2','view','0. Import z Excela'], ['l3 chosen','tablegrid','Strefy TOP stamp z opisem | WSC']
].map(([lvl, ic, txt]) => `<li class="d-flex align-items-center ${lvl}">${/l[01]/.test(lvl) ? '<i class="open-mark"></i>' : ''}${icon(ic)}<span>${txt}</span></li>`).join('');

/* Quick options under the drawing */
document.getElementById('status').insertAdjacentHTML('beforeend', [
  ['fit','262%'], ['turn','0,00°'], ['scale','1:50'], ['layers','Warstwy domyślne'], ['modelview','Cały model'], ['pens','Pióra domyślne'],
  ['screen','Repr. domyślna'], ['override','Brak zastąpień'], ['phase','Etap domyślny'], ['structure','Tylko główny model'], ['norm','Polski arch.']
].map(([ic, txt]) => `<button class="quick arrow-r d-flex align-items-center">${icon(ic)}<span class="flex-grow-1 text-center">${txt}</span></button>`).join(''));

document.querySelectorAll('[data-icons]').forEach(el => el.innerHTML = el.dataset.icons.split(' ').map(expand).join(''));
document.querySelectorAll('[data-icon]').forEach(el => el.insertAdjacentHTML('afterbegin', icon(el.dataset.icon.split('-')[0])));
</script>
<script src="https://cdn.jsdelivr.net/npm/bootstrap@5.3.0/dist/js/bootstrap.bundle.min.js"></script>
</body>
</html>
